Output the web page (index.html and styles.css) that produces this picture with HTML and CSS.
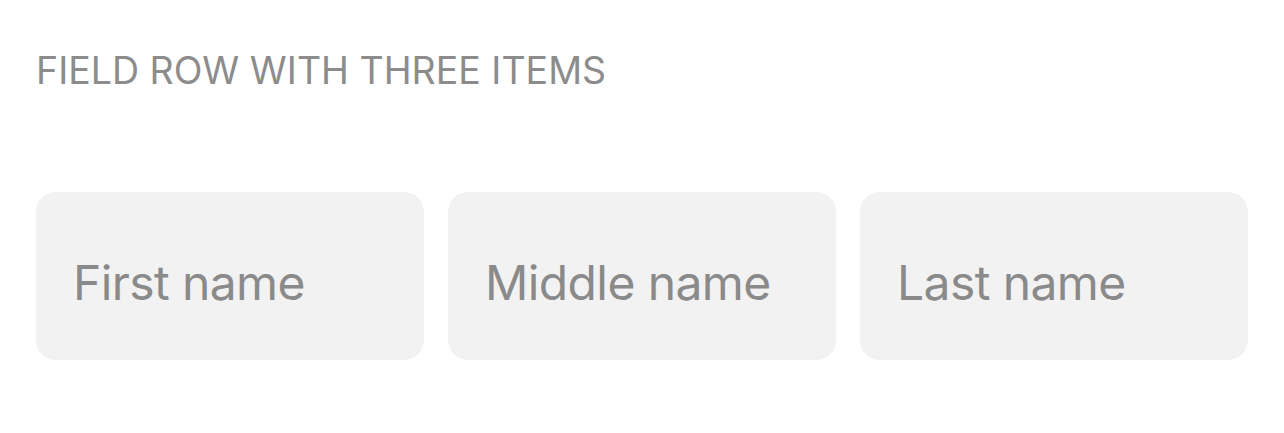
FILE: index.html
```html
<!DOCTYPE html>
<html lang="en">
<head>
<meta charset="utf-8">
<title>Field row</title>
<link rel="stylesheet" href="styles.css">
</head>
<body>
<main class="page">
  <h2 class="section-title">FIELD ROW WITH THREE ITEMS</h2>
  <div class="field-row">
    <input class="field" type="text" placeholder="First name">
    <input class="field" type="text" placeholder="Middle name">
    <input class="field" type="text" placeholder="Last name">
  </div>
</main>
</body>
</html>
```

FILE: styles.css
```css
html, body {
  margin: 0;
  padding: 0;
  background: #ffffff;
}

.page {
  padding: 49px 36px 0 36px;
}

.section-title {
  margin: 0;
  font-family: Inter, "Noto Sans", sans-serif;
  font-weight: 400;
  font-size: 37.5px;
  line-height: 44px;
  color: #8c8c8c;
}

.field-row {
  margin-top: 99px;
  display: grid;
  grid-template-columns: repeat(3, 1fr);
  gap: 24px;
}

.field {
  box-sizing: border-box;
  width: 100%;
  height: 168px;
  margin: 0;
  border: none;
  outline: none;
  border-radius: 20px;
  background: #f2f2f2;
  padding: 13px 37px 0 37px;
  font-family: Inter, "Noto Sans", sans-serif;
  font-size: 48px;
  letter-spacing: -0.6px;
  color: #333333;
}

.field::placeholder {
  color: #8a8a8a;
  opacity: 1;
}
```
